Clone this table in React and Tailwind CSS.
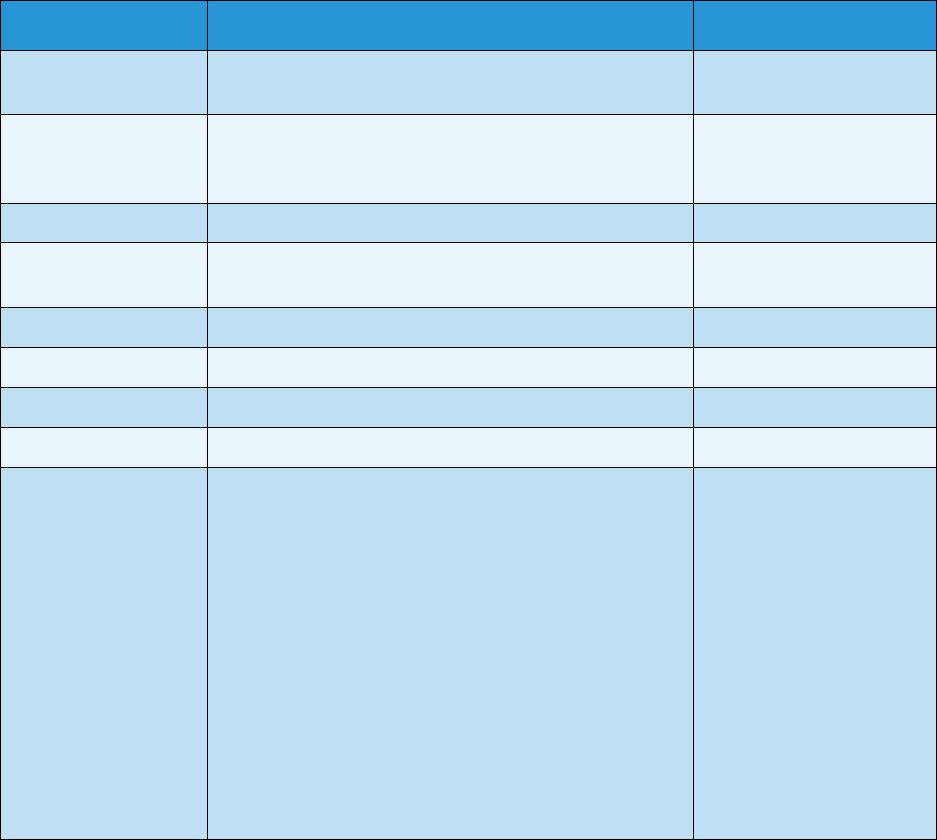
import React from "react";

// row heights in px, each one including its bottom rule
const rows = [
  { h: "h-[64px]", bg: "bg-[#bee0f2]" },
  { h: "h-[89px]", bg: "bg-[#eaf5fb]" },
  { h: "h-[39px]", bg: "bg-[#bee0f2]" },
  { h: "h-[65px]", bg: "bg-[#eaf5fb]" },
  { h: "h-[40px]", bg: "bg-[#bee0f2]" },
  { h: "h-[40px]", bg: "bg-[#eaf5fb]" },
  { h: "h-[40px]", bg: "bg-[#bee0f2]" },
  { h: "h-[40px]", bg: "bg-[#eaf5fb]" },
  { h: "h-[372px]", bg: "bg-[#bee0f2]" },
];

const Row = ({ h, bg, children }) => (
  <div className={`flex ${h} ${bg} border-b border-black`}>
    <div className="w-[207px] shrink-0 border-r border-black px-2 py-1 text-sm">
      {children?.[0]}
    </div>
    <div className="w-[486px] shrink-0 border-r border-black px-2 py-1 text-sm">
      {children?.[1]}
    </div>
    <div className="w-[243px] shrink-0 border-r border-black px-2 py-1 text-sm">
      {children?.[2]}
    </div>
  </div>
);

const App = () => {
  return (
    <div className="w-[937px] h-[840px] overflow-hidden bg-white font-['Liberation_Sans',sans-serif]">
      <div className="w-[938px] border-t border-l border-black">
        <div className="flex h-[50px] bg-[#2795d5] border-b border-black text-white font-bold">
          <div className="w-[207px] shrink-0 border-r border-black" />
          <div className="w-[486px] shrink-0 border-r border-black" />
          <div className="w-[243px] shrink-0 border-r border-black" />
        </div>
        {rows.map((r, i) => (
          <Row key={i} h={r.h} bg={r.bg} />
        ))}
      </div>
    </div>
  );
};

export default App;
